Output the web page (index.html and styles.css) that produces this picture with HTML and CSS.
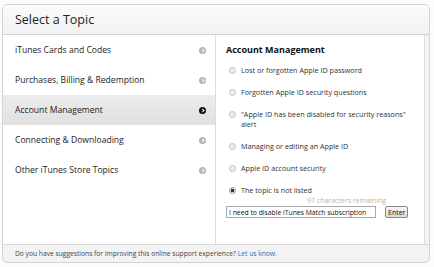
FILE: index.html
```html
<!DOCTYPE html>
<html lang="en">
<head>
  <meta charset="UTF-8">
  <title>Select a Topic</title>
  <link rel="stylesheet" href="styles.css">
</head>
<body>
  <div class="box">
    <!-- HEADER -->
    <div class="box-head">
      <h1>Select a Topic</h1>
    </div>
    <!-- BODY -->
    <div class="box-body">
      <ul class="topics">
        <li class="topic"><span>iTunes Cards and Codes</span><i class="go"></i></li>
        <li class="topic"><span>Purchases, Billing &amp; Redemption</span><i class="go"></i></li>
        <li class="topic sel"><span>Account Management</span><i class="go"></i></li>
        <li class="topic"><span>Connecting &amp; Downloading</span><i class="go"></i></li>
        <li class="topic"><span>Other iTunes Store Topics</span><i class="go"></i></li>
      </ul>
      <div class="detail">
        <h2>Account Management</h2>
        <ul class="opts">
          <li class="opt"><i class="radio"></i><span>Lost or forgotten Apple ID password</span></li>
          <li class="opt"><i class="radio"></i><span>Forgotten Apple ID security questions</span></li>
          <li class="opt"><i class="radio"></i><span>"Apple ID has been disabled for security reasons"<br>alert</span></li>
          <li class="opt"><i class="radio"></i><span>Managing or editing an Apple ID</span></li>
          <li class="opt"><i class="radio"></i><span>Apple ID account security</span></li>
          <li class="opt"><i class="radio on"></i><span>The topic is not listed</span></li>
        </ul>
        <div class="remain">97 characters remaining</div>
        <div class="ask">
          <input type="text" class="ask-text" value="I need to disable iTunes Match subscription">
          <button class="ask-btn">Enter</button>
        </div>
      </div>
    </div>
    <!-- FOOTER -->
    <div class="box-foot">
      Do you have suggestions for improving this online support experience? <a href="#">Let us know.</a>
    </div>
  </div>
</body>
</html>
```
FILE: styles.css
```css
* {
  margin: 0;
  padding: 0;
  box-sizing: border-box;
  font-family: "Open Sans", "Liberation Sans", sans-serif;
}
body {
  background: #fbfbfb;
  padding: 4px 4px 0 2px;
}
.box {
  width: 428px;
  height: 259px;
  border: 1px solid #d4d4d4;
  border-radius: 5px;
  background: #f3f3f3;
  display: flex;
  flex-direction: column;
  overflow: hidden;
}
.box-head {
  height: 30px;
  border-bottom: 1px solid #d2d2d2;
  background: linear-gradient(#fbfbfb, #f1f1f1);
  display: flex;
  align-items: center;
  padding-left: 12px;
}
.box-head h1 {
  font-size: 12.5px;
  font-weight: normal;
  color: #222;
}
.box-body {
  display: flex;
  height: 209px;
  background: #f3f3f3;
}

/* left column */
.topics {
  list-style: none;
  width: 213px;
  background: #fff;
  border-right: 1px solid #dcdcdc;
}
.topic {
  height: 30px;
  display: flex;
  align-items: center;
  justify-content: space-between;
  padding: 0 9px 0 12px;
  font-size: 8.6px;
  color: #222;
}
.topic.sel {
  background: linear-gradient(#ececec, #e0e0e0);
}
.go {
  width: 7px;
  height: 7px;
  border-radius: 50%;
  background: #b4b4b4;
  position: relative;
}
.go::after {
  content: "";
  position: absolute;
  left: 1.5px;
  top: 2px;
  width: 2px;
  height: 2px;
  border-top: 1px solid #fff;
  border-right: 1px solid #fff;
  transform: rotate(45deg);
}
.topic.sel .go { background: #111; }

/* right panel */
.detail {
  flex: 1;
  background: #fff;
  margin-right: 4px;
  border-right: 1px solid #dedede;
  padding: 8px 0 0 10px;
}
.detail h2 {
  font-size: 9px;
  font-weight: bold;
  color: #111;
  margin-bottom: 9px;
}
.opts { list-style: none; }
.opt {
  display: flex;
  align-items: flex-start;
  font-size: 7.2px;
  line-height: 10px;
  color: #333;
  margin-bottom: 12px;
}
.opt:last-child { margin-bottom: 0; }
.radio {
  width: 7px;
  height: 7px;
  margin: 1.5px 5px 0 3px;
  border-radius: 50%;
  border: 1px solid #c4c4c4;
  background: #ececec;
  flex: none;
}
.radio.on {
  background: radial-gradient(#333 0 1.5px, #e6e6e6 1.8px);
  border-color: #999;
}
.remain {
  font-size: 7px;
  color: #b4b4b4;
  margin: 1px 0 0 81px;
  line-height: 10px;
}
.ask {
  display: flex;
  align-items: center;
}
.ask-text {
  width: 150px;
  height: 12px;
  border: 1px solid #a8a8a8;
  font-size: 6.8px;
  padding: 0 2px;
  color: #111;
}
.ask-btn {
  margin-left: 9px;
  height: 12px;
  padding: 0 2px;
  font-size: 7px;
  border: 1px solid #888;
  border-radius: 2px;
  background: linear-gradient(#f6f6f6, #dcdcdc);
  color: #111;
}

/* footer */
.box-foot {
  flex: 1;
  border-top: 1px solid #d8d8d8;
  display: flex;
  align-items: center;
  padding-left: 12px;
  font-size: 6.7px;
  color: #444;
}
.box-foot a {
  color: #2a6bb5;
  text-decoration: none;
  margin-left: 2px;
}
```
